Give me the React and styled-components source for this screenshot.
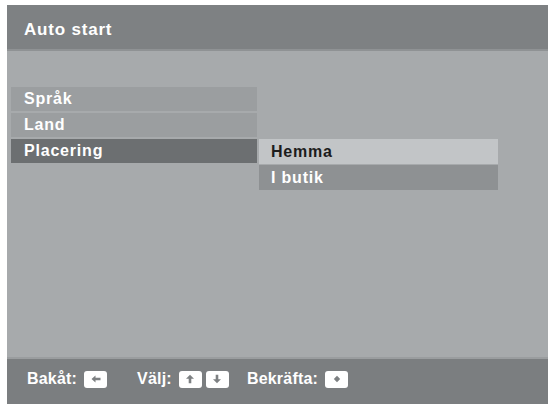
import React from 'react';
import styled, { createGlobalStyle } from 'styled-components';

const GlobalStyle = createGlobalStyle`
  body {
    margin: 0;
    background: #ffffff;
    font-family: "Liberation Sans", Arial, sans-serif;
  }
`;

const menuItems = ['Språk', 'Land', 'Placering'];
const options = ['Hemma', 'I butik'];
const selectedIndex = 2;
const ROW = 24;
const ROW_GAP = 2;

// Small white remote-key glyphs shown in the hint bar
const KeyIcon = ({ kind }) => (
  <Key>
    <svg width="12" height="10" viewBox="0 0 12 10">
      {kind === 'left' && (
        <path d="M1.5 5 L5.5 1.5 L5.5 3.7 L10.5 3.7 L10.5 6.3 L5.5 6.3 L5.5 8.5 Z" fill="#7d8082" />
      )}
      {kind === 'up' && (
        <path d="M6 0.8 L10 4.8 L7.3 4.8 L7.3 9.2 L4.7 9.2 L4.7 4.8 L2 4.8 Z" fill="#7d8082" />
      )}
      {kind === 'down' && (
        <path d="M6 9.2 L10 5.2 L7.3 5.2 L7.3 0.8 L4.7 0.8 L4.7 5.2 L2 5.2 Z" fill="#7d8082" />
      )}
      {kind === 'ok' && <path d="M6 1.8 L9.2 5 L6 8.2 L2.8 5 Z" fill="#7d8082" />}
    </svg>
  </Key>
);

const App = () => {
  return (
    <>
      <GlobalStyle />
      <Page>
        <Screen>
          <Header>Auto start</Header>

          <Body>
            <Menu>
              {menuItems.map((item, i) => (
                <MenuRow key={item} active={i === selectedIndex}>
                  {item}
                </MenuRow>
              ))}
            </Menu>

            <SubMenu offset={selectedIndex * (ROW + ROW_GAP)}>
              {options.map((opt, i) => (
                <OptionRow key={opt} highlighted={i === 0}>
                  {opt}
                </OptionRow>
              ))}
            </SubMenu>
          </Body>

          <Footer>
            <Hint space={30}>
              Bakåt:
              <KeyIcon kind="left" />
            </Hint>
            <Hint space={18}>
              Välj:
              <KeyIcon kind="up" />
              <KeyIcon kind="down" />
            </Hint>
            <Hint>
              Bekräfta:
              <KeyIcon kind="ok" />
            </Hint>
          </Footer>
        </Screen>
      </Page>
    </>
  );
};

const Page = styled.div`
  padding: 5px 6px 0 7px;
  height: 404px;
  box-sizing: border-box;
`;

const Screen = styled.div`
  height: 399px;
  display: flex;
  flex-direction: column;
  background: #a7aaac;
`;

const Header = styled.div`
  height: 46px;
  display: flex;
  align-items: center;
  padding: 5px 0 0 17px;
  box-sizing: border-box;
  background: #7e8183;
  border-bottom: 2px solid #8f9294;
  color: #ffffff;
  font-size: 17px;
  font-weight: bold;
  letter-spacing: 0.8px;
`;

const Body = styled.div`
  flex: 1;
  display: grid;
  grid-template-columns: 246px 239px;
  column-gap: 2px;
  align-items: start;
  padding: 36px 0 0 4px;
`;

const Menu = styled.div`
  display: flex;
  flex-direction: column;
  gap: ${ROW_GAP}px;
`;

const MenuRow = styled.div`
  height: ${ROW}px;
  display: flex;
  align-items: center;
  padding-left: 13px;
  background: ${props => (props.active ? '#6c6f71' : '#9b9ea0')};
  color: #ffffff;
  font-size: 16px;
  font-weight: bold;
  letter-spacing: 0.8px;
`;

const SubMenu = styled.div`
  display: flex;
  flex-direction: column;
  gap: 1px;
  padding-top: ${props => props.offset}px;
`;

const OptionRow = styled.div`
  height: ${ROW + 1}px;
  display: flex;
  align-items: center;
  padding-left: 12px;
  background: ${props => (props.highlighted ? '#c2c5c7' : '#8e9193')};
  color: ${props => (props.highlighted ? '#1c1c1c' : '#ffffff')};
  font-size: 16px;
  font-weight: bold;
  letter-spacing: 0.8px;
`;

const Footer = styled.div`
  height: 47px;
  display: flex;
  align-items: center;
  padding: 0 0 5px 20px;
  box-sizing: border-box;
  background: #7b7e80;
  border-top: 2px solid #9a9d9f;
`;

const Hint = styled.div`
  display: flex;
  align-items: center;
  gap: 4px;
  margin-right: ${props => props.space || 0}px;
  color: #ffffff;
  font-size: 16px;
  font-weight: bold;
  letter-spacing: 0.2px;
  & > :first-of-type {
    margin-left: 3px;
  }
`;

const Key = styled.span`
  width: 23px;
  height: 17px;
  display: inline-flex;
  align-items: center;
  justify-content: center;
  background: #ffffff;
  border-radius: 3px;
`;

export default App;
